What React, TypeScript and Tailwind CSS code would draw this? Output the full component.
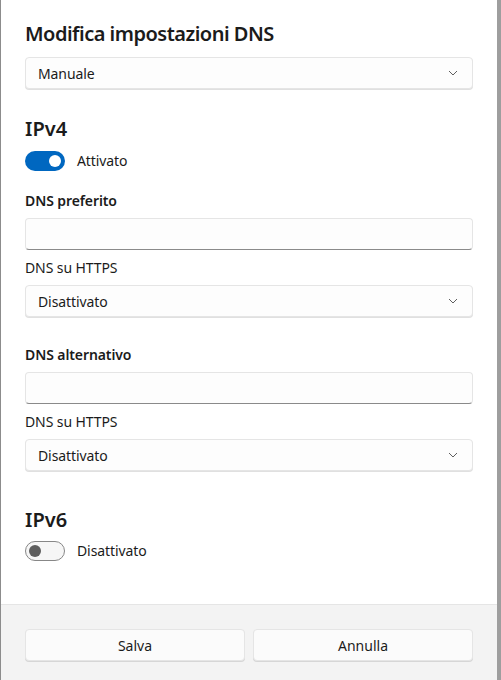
import React from 'react';

const font = { fontFamily: '"Noto Sans", "Open Sans", sans-serif' };

function Chevron() {
  return (
    <svg width="10" height="6" viewBox="0 0 10 6" className="text-[#5f5f5f]">
      <path d="M1 1 L5 5 L9 1" fill="none" stroke="currentColor" strokeWidth="1" />
    </svg>
  );
}

function Select({ value }: { value: string }) {
  return (
    <div className="h-[32px] flex items-center justify-between pl-3 pr-[14px] rounded-[4px] border border-[#e5e5e5] bg-[#fdfdfd] shadow-[0_1px_0_#e0e0e0]">
      <span className="text-[14px] tracking-[-0.1px] text-[#1b1b1b]">{value}</span>
      <Chevron />
    </div>
  );
}

function TextBox() {
  return (
    <div className="h-[32px] rounded-[4px] border border-[#e5e5e5] border-b-[#8a8a8a] bg-[#fdfdfd]" />
  );
}

function Toggle({ on, label }: { on: boolean; label: string }) {
  return (
    <div className="flex items-center gap-3">
      {on ? (
        <div className="w-[40px] h-[20px] rounded-full bg-[#0067c0] flex items-center justify-end pr-[4px]">
          <div className="w-[12px] h-[12px] rounded-full bg-white" />
        </div>
      ) : (
        <div className="w-[40px] h-[20px] rounded-full border border-[#878787] bg-[#f6f6f6] flex items-center pl-[3px]">
          <div className="w-[12px] h-[12px] rounded-full bg-[#5d5d5d]" />
        </div>
      )}
      <span className="text-[14px] tracking-[-0.1px] text-[#1b1b1b]">{label}</span>
    </div>
  );
}

export default function App() {
  return (
    <div className="w-[501px] h-[680px] flex bg-[#9e9e9e]" style={font}>
      <div className="w-[497px] h-full flex flex-col bg-white border-l border-[#8c8c8c]">
        <div className="flex-1 flex flex-col px-6 pt-[20px]">
          <h1 className="text-[20px] leading-[28px] font-semibold tracking-[-0.5px] text-[#1b1b1b]">Modifica impostazioni DNS</h1>
          <div className="mt-[9px]">
            <Select value="Manuale" />
          </div>

          <h2 className="mt-[26px] text-[20px] leading-[28px] font-semibold text-[#1b1b1b]">IPv4</h2>
          <div className="mt-[7px]">
            <Toggle on label="Attivato" />
          </div>

          <div className="mt-[20px] text-[14px] leading-[20px] font-semibold tracking-[-0.1px] text-[#1b1b1b]">DNS preferito</div>
          <div className="mt-[7px]">
            <TextBox />
          </div>
          <div className="mt-[8px] text-[14px] leading-[20px] tracking-[-0.1px] text-[#1b1b1b]">DNS su HTTPS</div>
          <div className="mt-[7px]">
            <Select value="Disattivato" />
          </div>

          <div className="mt-[28px] text-[14px] leading-[20px] font-semibold tracking-[-0.1px] text-[#1b1b1b]">DNS alternativo</div>
          <div className="mt-[7px]">
            <TextBox />
          </div>
          <div className="mt-[8px] text-[14px] leading-[20px] tracking-[-0.1px] text-[#1b1b1b]">DNS su HTTPS</div>
          <div className="mt-[7px]">
            <Select value="Disattivato" />
          </div>

          <h2 className="mt-[35px] text-[20px] leading-[28px] font-semibold text-[#1b1b1b]">IPv6</h2>
          <div className="mt-[6px]">
            <Toggle on={false} label="Disattivato" />
          </div>
        </div>

        <div className="h-[76px] shrink-0 border-t border-[#e5e5e5] bg-[#f3f3f3] px-6 pt-[24px]">
          <div className="grid grid-cols-2 gap-2">
            <button className="h-[32px] rounded-[4px] border border-[#e5e5e5] bg-[#fbfbfb] shadow-[0_1px_0_#d6d6d6] text-[14px] text-[#1b1b1b]">
              Salva
            </button>
            <button className="h-[32px] rounded-[4px] border border-[#e5e5e5] bg-[#fbfbfb] shadow-[0_1px_0_#d6d6d6] text-[14px] text-[#1b1b1b]">
              Annulla
            </button>
          </div>
        </div>
      </div>
    </div>
  );
}
